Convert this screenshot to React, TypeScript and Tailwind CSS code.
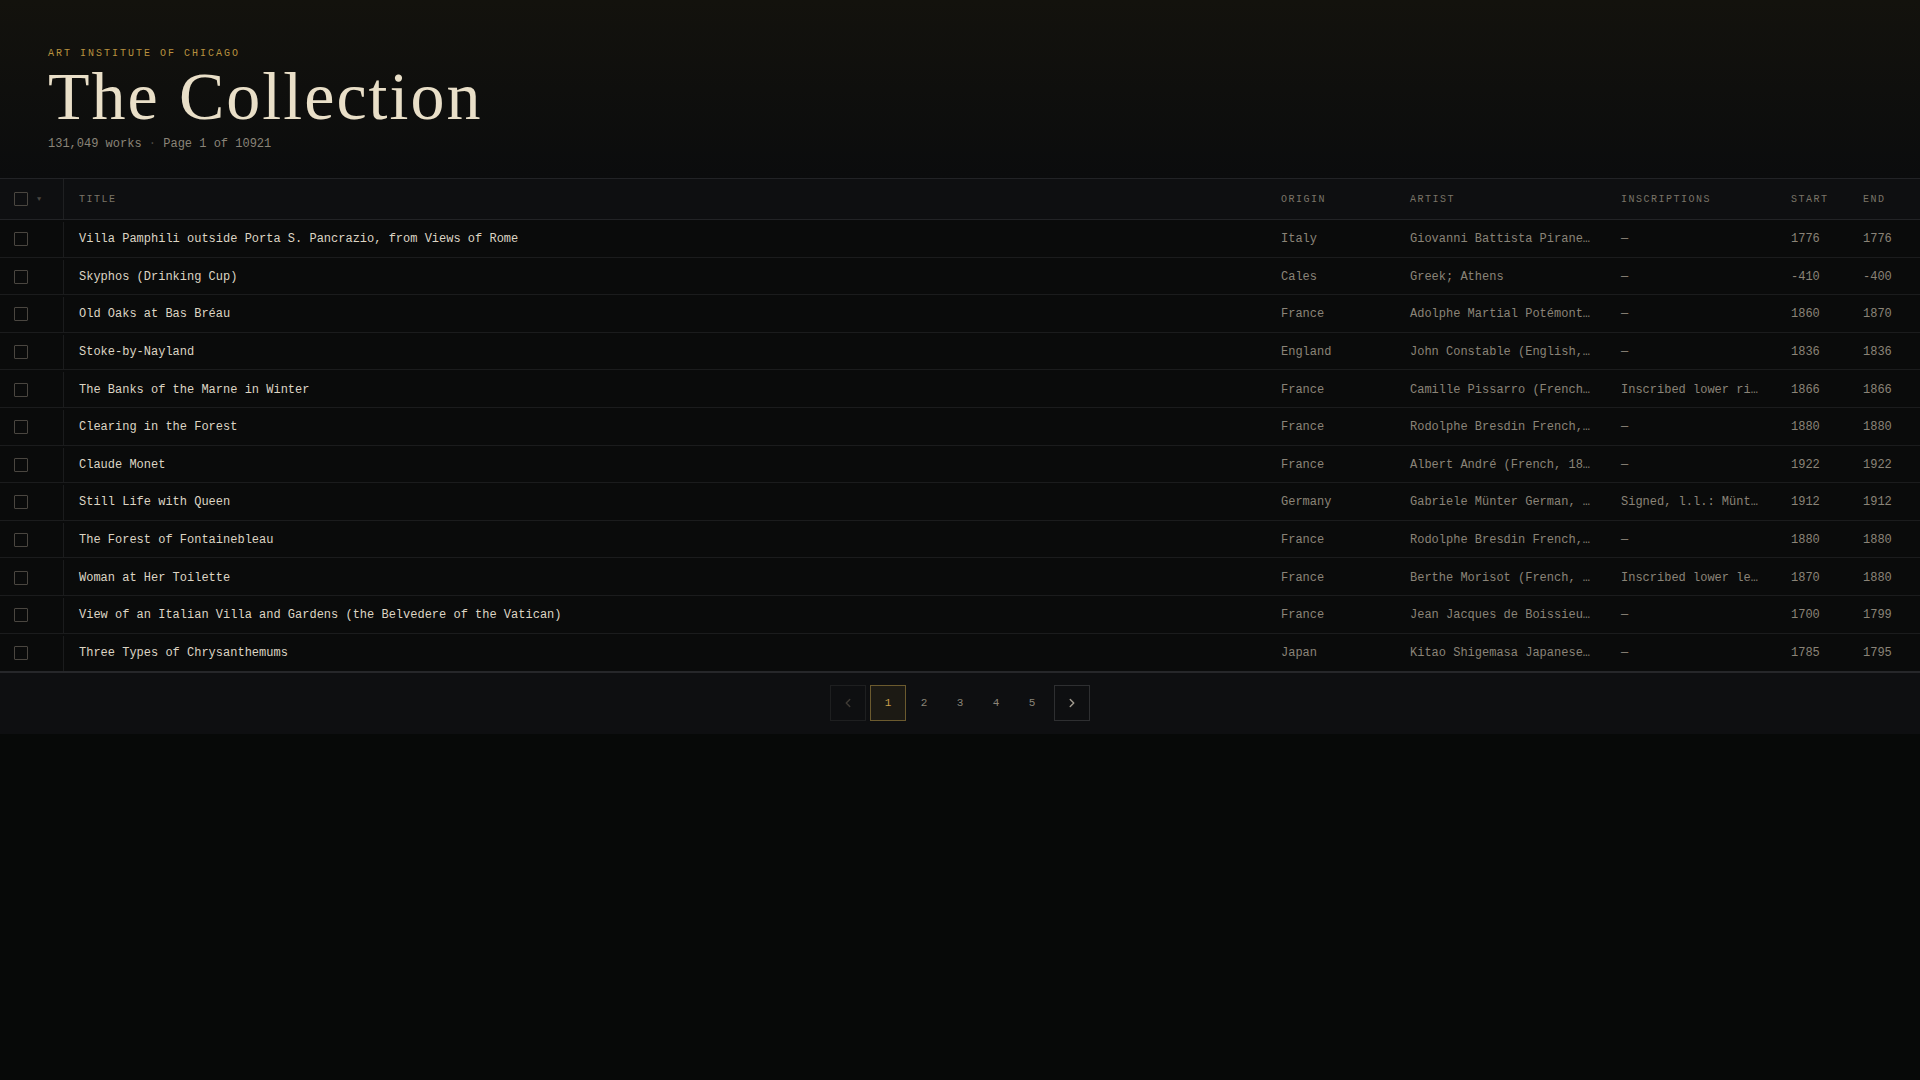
import React from "react"
import { ChevronLeft, ChevronRight } from "lucide-react"

type Artwork = {
  title: string
  origin: string
  artist: string
  inscriptions: string
  start: string
  end: string
}

const rows: Artwork[] = [
  { title: "Villa Pamphili outside Porta S. Pancrazio, from Views of Rome", origin: "Italy", artist: "Giovanni Battista Piranesi (Italian, 1720-1778)", inscriptions: "—", start: "1776", end: "1776" },
  { title: "Skyphos (Drinking Cup)", origin: "Cales", artist: "Greek; Athens", inscriptions: "—", start: "-410", end: "-400" },
  { title: "Old Oaks at Bas Bréau", origin: "France", artist: "Adolphe Martial Potémont (French, 1828-1883)", inscriptions: "—", start: "1860", end: "1870" },
  { title: "Stoke-by-Nayland", origin: "England", artist: "John Constable (English, 1776-1837)", inscriptions: "—", start: "1836", end: "1836" },
  { title: "The Banks of the Marne in Winter", origin: "France", artist: "Camille Pissarro (French, 1830-1903)", inscriptions: "Inscribed lower right: C. Pissarro", start: "1866", end: "1866" },
  { title: "Clearing in the Forest", origin: "France", artist: "Rodolphe Bresdin French, 1822-1885", inscriptions: "—", start: "1880", end: "1880" },
  { title: "Claude Monet", origin: "France", artist: "Albert André (French, 1869-1954)", inscriptions: "—", start: "1922", end: "1922" },
  { title: "Still Life with Queen", origin: "Germany", artist: "Gabriele Münter German, 1877-1962", inscriptions: "Signed, l.l.: Münter", start: "1912", end: "1912" },
  { title: "The Forest of Fontainebleau", origin: "France", artist: "Rodolphe Bresdin French, 1822-1885", inscriptions: "—", start: "1880", end: "1880" },
  { title: "Woman at Her Toilette", origin: "France", artist: "Berthe Morisot (French, 1841-1895)", inscriptions: "Inscribed lower left: Berthe Morisot", start: "1870", end: "1880" },
  { title: "View of an Italian Villa and Gardens (the Belvedere of the Vatican)", origin: "France", artist: "Jean Jacques de Boissieu (French, 1736-1810)", inscriptions: "—", start: "1700", end: "1799" },
  { title: "Three Types of Chrysanthemums", origin: "Japan", artist: "Kitao Shigemasa Japanese, 1739-1820", inscriptions: "—", start: "1785", end: "1795" },
]

const grid = "grid grid-cols-[64px_1fr_129px_211px_170px_72px_72px] items-center"

const Checkbox = () => (
  <div className="w-[14px] h-[14px] border border-[#4a4640] rounded-[1px]" />
)

const App = () => {
  return (
    <div className="min-h-screen w-full bg-[#070908] font-['Liberation_Mono',monospace] text-[12px]">
      <header className="px-12 pt-[48px] pb-[26px] bg-gradient-to-b from-[#13120d] to-[#0b0c0d]">
        <p className="text-[10px] leading-[12px] tracking-[0.2em] text-[#b8913f]">
          ART INSTITUTE OF CHICAGO
        </p>
        <h1 className="mt-[2px] font-['Liberation_Serif',serif] text-[68px] leading-[68px] tracking-[0.03em] text-[#e9dfc8]">
          The Collection
        </h1>
        <p className="mt-[6px] leading-4 text-[#8a8478]">
          131,049 works <span className="text-[#4a4640]">·</span> Page 1 of 10921
        </p>
      </header>

      <div className="bg-[#0a0b0b]">
        <div className={`${grid} h-[42px] bg-[#0e0f11] border-t border-b border-[#222326]`}>
          <div className="h-full flex items-center gap-[9px] pl-[14px] border-r border-[#1f2022]">
            <Checkbox />
            <span className="text-[7px] text-[#4a4640]">▼</span>
          </div>
          {["TITLE", "ORIGIN", "ARTIST", "INSCRIPTIONS", "START", "END"].map((h) => (
            <div key={h} className="px-[15px] text-[10px] tracking-[0.15em] text-[#7a7468]">
              {h}
            </div>
          ))}
        </div>

        {rows.map((r) => (
          <div key={r.title} className={`${grid} h-[37.6px] pt-[2px] border-b border-[#1b1c1d] last:border-b-0`}>
            <div className="h-full flex items-center pl-[14px] border-r border-[#1b1c1d]">
              <Checkbox />
            </div>
            <div className="px-[15px] truncate text-[#ddd5c4]">{r.title}</div>
            <div className="px-[15px] truncate text-[#8a8478]">{r.origin}</div>
            <div className="px-[15px] truncate text-[#8a8478]">{r.artist}</div>
            <div className="px-[15px] truncate text-[#8a8478]">{r.inscriptions}</div>
            <div className="px-[15px] truncate text-[#8a8478]">{r.start}</div>
            <div className="px-[15px] truncate text-[#8a8478]">{r.end}</div>
          </div>
        ))}
      </div>

      <div className="bg-[#0e0f11] border-t-2 border-[#26272a] pt-[12px] pb-[13px] flex justify-center">
        <div className="flex items-center gap-1">
          <button className="w-9 h-9 flex items-center justify-center border border-[#1e1f20] text-[#3f3b35]">
            <ChevronLeft size={14} strokeWidth={2.5} />
          </button>
          <div className="flex">
            <button className="w-9 h-9 flex items-center justify-center border border-[#6b5a2e] bg-[#1c1a14] text-[11px] text-[#c9a04a]">
              1
            </button>
            {[2, 3, 4, 5].map((n) => (
              <button key={n} className="w-9 h-9 flex items-center justify-center text-[11px] text-[#8a8478]">
                {n}
              </button>
            ))}
          </div>
          <button className="w-9 h-9 flex items-center justify-center border border-[#2e2f31] text-[#a09a8e]">
            <ChevronRight size={14} strokeWidth={2.5} />
          </button>
        </div>
      </div>
    </div>
  )
}

export default App
